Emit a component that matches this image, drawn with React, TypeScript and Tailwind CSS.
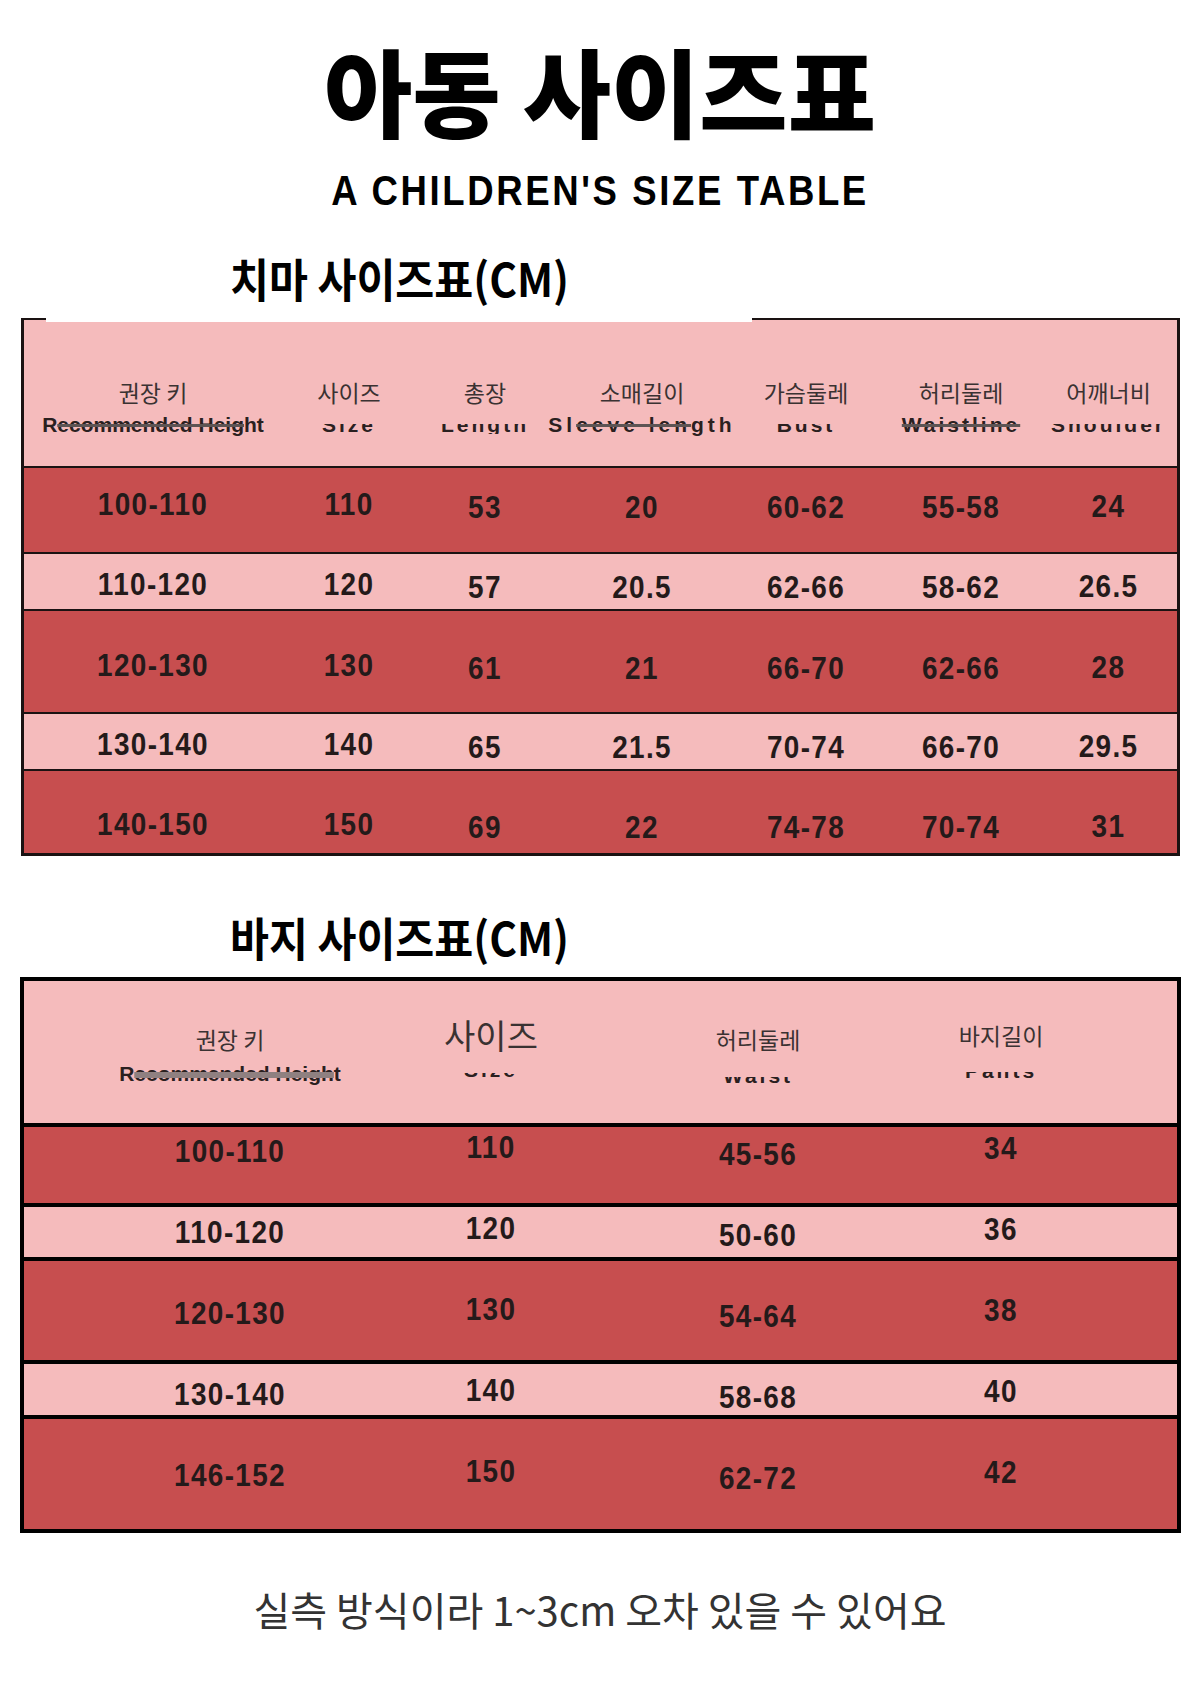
import type { ReactNode } from 'react'

const KR = "font-['Noto_Sans_CJK_KR','Noto_Sans',sans-serif]"
const EN = "font-['Liberation_Sans',Arial,sans-serif]"

const DARK = 'bg-[#c74e4f]'
const LIGHT = 'bg-[#f5bbbc]'

function SectionTitle({ children, className }: { children: ReactNode; className: string }) {
  return (
    <div className={`flex pl-[230px] ${className}`}>
      <span className={`${KR} block origin-left scale-x-[0.92] whitespace-nowrap text-[46px] leading-none font-bold text-black`}>
        {children}
      </span>
    </div>
  )
}

// english caption with only the lower part of the letters showing
function Cut({ children, className, inner }: { children: ReactNode; className: string; inner: string }) {
  return (
    <span className={`block overflow-hidden ${className}`}>
      <span className={`${EN} block whitespace-nowrap text-[21px] leading-none font-bold tracking-[3px] text-[#2a2020] ${inner}`}>
        {children}
      </span>
    </span>
  )
}

function En({ children, className = '' }: { children: ReactNode; className?: string }) {
  return (
    <span className={`${EN} mt-[10px] block whitespace-nowrap text-[21px] leading-none font-bold text-[#2a2020] ${className}`}>
      {children}
    </span>
  )
}

const skirtHead = [
  {
    ko: '권장 키',
    en: (
      <En>
        R<span className="line-through decoration-[#5d5454] decoration-3">ecommended Heig</span>ht
      </En>
    ),
  },
  { ko: '사이즈', en: <Cut className="mt-[20px] h-[10px]" inner="-mt-[10px]">Size</Cut> },
  { ko: '총장', en: <Cut className="mt-[20px] h-[10px]" inner="-mt-[10px]">Length</Cut> },
  {
    ko: '소매길이',
    en: (
      <En className="tracking-[4px]">
        Sl<span className="line-through decoration-[#5d5454] decoration-3">eeve len</span>gth
      </En>
    ),
  },
  { ko: '가슴둘레', en: <Cut className="mt-[20px] h-[10px]" inner="-mt-[10px]">Bust</Cut> },
  {
    ko: '허리둘레',
    en: (
      <En className="tracking-[3px]">
        <span className="line-through decoration-[#5d5454] decoration-3">Waistline</span>
      </En>
    ),
  },
  { ko: '어깨너비', en: <Cut className="mt-[20px] h-[10px]" inner="-mt-[10px]">Shoulder</Cut> },
]

const skirtRows = [
  { cells: ['100-110', '110', '53', '20', '60-62', '55-58', '24'], bg: DARK, cls: 'h-[86px] pb-[12px] border-b-2' },
  { cells: ['110-120', '120', '57', '20.5', '62-66', '58-62', '26.5'], bg: LIGHT, cls: 'h-[57px] pt-[5px] border-b-2' },
  { cells: ['120-130', '130', '61', '21', '66-70', '62-66', '28'], bg: DARK, cls: 'h-[103px] pt-[7px] border-b-2' },
  { cells: ['130-140', '140', '65', '21.5', '70-74', '66-70', '29.5'], bg: LIGHT, cls: 'h-[57px] pt-[5px] border-b-2' },
  { cells: ['140-150', '150', '69', '22', '74-78', '70-74', '31'], bg: DARK, cls: 'h-[85px] pt-[24px] border-b-[3px]' },
]

const skirtColShift = ['', '', 'pt-[6px]', 'pt-[6px]', 'pt-[6px]', 'pt-[6px]', 'pt-[4px]']

const skirtCols = 'grid-cols-[258px_134px_138px_176px_152px_158px_137px]'

const NUM = `${EN} flex justify-center scale-x-[0.9] whitespace-nowrap text-[31px] leading-none font-bold tracking-[1.5px] text-[#241a1a]`

function SkirtTable() {
  return (
    <div className="mt-[18px] ml-[21px] w-[1159px] border-x-[3px] border-[#1a1212]">
      <div className="flex h-[4px]">
        <div className={`w-[22px] border-t-2 border-[#1a1212] ${LIGHT}`} />
        <div className="w-[706px] bg-white" />
        <div className={`flex-1 border-t-2 border-[#1a1212] ${LIGHT}`} />
      </div>
      <div className={`grid ${skirtCols} h-[146px] border-b-2 border-[#1a1212] ${LIGHT}`}>
        {skirtHead.map((h) => (
          <div key={h.ko} className="flex flex-col items-center pt-[59px]">
            <span className={`${KR} block whitespace-nowrap text-[23px] leading-none text-[#3a3232]`}>{h.ko}</span>
            {h.en}
          </div>
        ))}
      </div>
      {skirtRows.map((r) => (
        <div key={r.cells[0]} className={`grid ${skirtCols} items-center border-[#1a1212] ${r.bg} ${r.cls}`}>
          {r.cells.map((c, i) => (
            <div key={i} className={`${NUM} ${skirtColShift[i]}`}>
              {c}
            </div>
          ))}
        </div>
      ))}
    </div>
  )
}

const pantsRows = [
  { cells: ['100-110', '110', '45-56', '34'], bg: DARK, cls: 'h-[80px] pb-[27px]' },
  { cells: ['110-120', '120', '50-60', '36'], bg: LIGHT, cls: 'h-[54px]' },
  { cells: ['120-130', '130', '54-64', '38'], bg: DARK, cls: 'h-[103px] pt-[6px]' },
  { cells: ['130-140', '140', '58-68', '40'], bg: LIGHT, cls: 'h-[55px] pt-[9px]' },
  { cells: ['146-152', '150', '62-72', '42'], bg: DARK, cls: 'h-[114px] pt-[2px]' },
]

const pantsColShift = ['', 'pb-[8px]', 'pt-[6px]', 'pb-[6px]']

const pantsCols = 'grid-cols-[412px_110px_424px_62px_1fr]'

function PantsTable() {
  return (
    <div className="mt-[18px] ml-[20px] w-[1161px] border-x-4 border-t-4 border-black">
      <div className={`grid ${pantsCols} h-[146px] border-b-4 border-black ${LIGHT}`}>
        <div className="flex flex-col items-center pt-[47px]">
          <span className={`${KR} block whitespace-nowrap text-[23px] leading-none text-[#3a3232]`}>권장 키</span>
          <span className={`${EN} mt-[12px] block whitespace-nowrap text-[21px] leading-none font-bold text-[#2a2020]`}>
            R<span className="line-through decoration-[#8f8080] decoration-6">ecommended Heigh</span>t
          </span>
        </div>
        <div className="flex flex-col items-center pt-[37px]">
          <span className={`${KR} block whitespace-nowrap text-[34px] leading-none text-[#3a3232]`}>사이즈</span>
          <Cut className="mt-[21px] h-[5px]" inner="-mt-[14px]">Size</Cut>
        </div>
        <div className="flex flex-col items-center pt-[47px]">
          <span className={`${KR} block whitespace-nowrap text-[23px] leading-none text-[#3a3232]`}>허리둘레</span>
          <Cut className="mt-[26px] h-[6px]" inner="-mt-[12px]">Waist</Cut>
        </div>
        <div className="flex flex-col items-center pt-[43px]">
          <span className={`${KR} block whitespace-nowrap text-[23px] leading-none text-[#3a3232]`}>바지길이</span>
          <Cut className="mt-[25px] h-[6px]" inner="-mt-[12px]">Pants</Cut>
        </div>
        <div />
      </div>
      {pantsRows.map((r) => (
        <div key={r.cells[0]} className={`grid ${pantsCols} items-center border-b-4 border-black ${r.bg} ${r.cls}`}>
          {r.cells.map((c, i) => (
            <div key={i} className={`${NUM} ${pantsColShift[i]}`}>
              {c}
            </div>
          ))}
          <div />
        </div>
      ))}
    </div>
  )
}

export default function App() {
  return (
    <div className="flex h-[1684px] w-[1200px] flex-col overflow-hidden bg-white">
      <h1 className={`${KR} mt-[41px] text-center text-[96px] leading-none font-black text-black`}>아동 사이즈표</h1>
      <div className="mt-[33px] flex justify-center">
        <span className={`${EN} block scale-x-[0.87] whitespace-nowrap text-[42px] leading-none font-bold tracking-[3px] text-black`}>
          A CHILDREN'S SIZE TABLE
        </span>
      </div>

      <SectionTitle className="mt-[42px]">치마 사이즈표(CM)</SectionTitle>
      <SkirtTable />

      <SectionTitle className="mt-[57px]">바지 사이즈표(CM)</SectionTitle>
      <PantsTable />

      <p className={`${KR} mt-[56px] text-center text-[40px] leading-none text-[#333333]`}>
        실측 방식이라 1~3cm 오차 있을 수 있어요
      </p>
    </div>
  )
}
